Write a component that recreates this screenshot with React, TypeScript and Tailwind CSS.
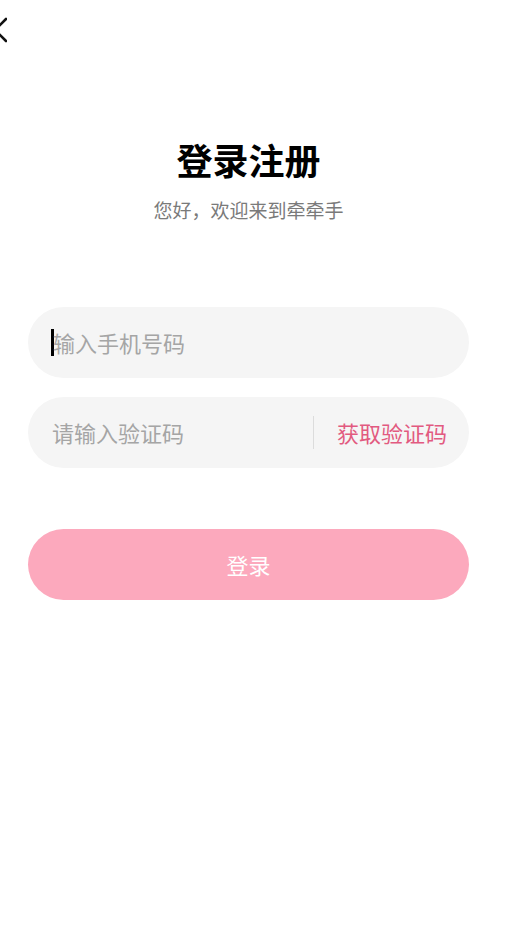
import React from 'react';

const font = { fontFamily: '"Noto Sans CJK SC", "Noto Sans", sans-serif' };

export default function App() {
  return (
    <div className="min-h-screen w-full bg-white" style={font}>
      <div className="w-[497px]">
        <header className="flex h-[60px] items-center">
          <svg width="20" height="30" viewBox="0 0 20 30" className="-ml-[13px]" fill="none">
            <path d="M19 4 L8 15 L19 26" stroke="#111" strokeWidth="2.6" strokeLinecap="round" strokeLinejoin="round" />
          </svg>
        </header>

        <div className="mt-[77px] flex flex-col items-center">
          <h1 className="text-[36px] font-bold leading-[44px] text-black">登录注册</h1>
          <p className="mt-[15px] text-[19px] leading-[28px] text-[#7a7a7a]">您好，欢迎来到牵牵手</p>
        </div>

        <div className="mt-[83px] flex flex-col px-[28px]">
          <div className="flex h-[71px] w-[441px] items-center rounded-full bg-[#f5f5f5] pl-[23px]">
            <span className="mr-[-1px] h-[27px] w-[3px] bg-black" />
            <span className="text-[22px] text-[#a5a5a5]">输入手机号码</span>
          </div>

          <div className="mt-[19px] flex h-[71px] w-[441px] items-center rounded-full bg-[#f5f5f5] pl-[24px] pr-[22px]">
            <span className="flex-1 text-[22px] text-[#a5a5a5]">请输入验证码</span>
            <span className="h-[33px] w-px bg-[#dcdcdc]" />
            <span className="ml-[23px] text-[22px] text-[#e25a80]">获取验证码</span>
          </div>

          <button className="mt-[61px] flex h-[71px] w-[441px] items-center justify-center rounded-full bg-[#fca9bd] text-[22px] text-white">
            登录
          </button>
        </div>
      </div>
    </div>
  );
}
